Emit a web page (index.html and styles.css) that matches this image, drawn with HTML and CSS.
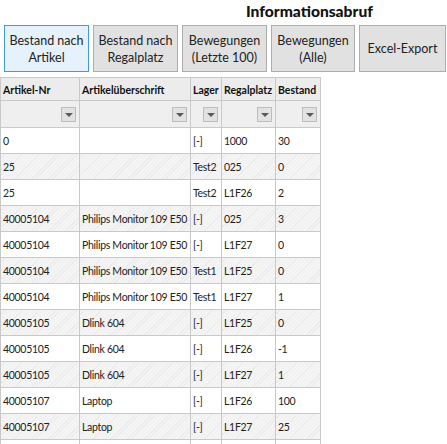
FILE: index.html
```html
<!DOCTYPE html>
<html>
<head>
<meta charset="utf-8">
<link rel="stylesheet" href="styles.css">
</head>
<body>
<div class="title">Informationsabruf</div>
<div class="buttons">
  <button class="btn btn-active">Bestand nach<br>Artikel</button>
  <button class="btn">Bestand nach<br>Regalplatz</button>
  <button class="btn">Bewegungen<br>(Letzte 100)</button>
  <button class="btn btn-4">Bewegungen<br>(Alle)</button>
  <button class="btn btn-5">Excel-Export</button>
</div>
<table class="grid">
  <colgroup>
    <col class="c1"><col class="c2"><col class="c3"><col class="c4"><col class="c5">
  </colgroup>
  <thead>
    <tr class="head">
      <th>Artikel-Nr</th><th>Artikelüberschrift</th><th>Lager</th><th>Regalplatz</th><th>Bestand</th>
    </tr>
    <tr class="filter">
      <td><span class="dd"></span></td><td><span class="dd"></span></td><td><span class="dd"></span></td><td><span class="dd"></span></td><td><span class="dd"></span></td>
    </tr>
  </thead>
  <tbody>
    <tr><td>0</td><td></td><td>[-]</td><td>1000</td><td>30</td></tr>
    <tr class="alt"><td>25</td><td></td><td>Test2</td><td>025</td><td>0</td></tr>
    <tr><td>25</td><td></td><td>Test2</td><td>L1F26</td><td>2</td></tr>
    <tr class="alt"><td>40005104</td><td>Philips Monitor 109 E50</td><td>[-]</td><td>025</td><td>3</td></tr>
    <tr><td>40005104</td><td>Philips Monitor 109 E50</td><td>[-]</td><td>L1F27</td><td>0</td></tr>
    <tr class="alt"><td>40005104</td><td>Philips Monitor 109 E50</td><td>Test1</td><td>L1F25</td><td>0</td></tr>
    <tr><td>40005104</td><td>Philips Monitor 109 E50</td><td>Test1</td><td>L1F27</td><td>1</td></tr>
    <tr class="alt"><td>40005105</td><td>Dlink 604</td><td>[-]</td><td>L1F25</td><td>0</td></tr>
    <tr><td>40005105</td><td>Dlink 604</td><td>[-]</td><td>L1F26</td><td>-1</td></tr>
    <tr class="alt"><td>40005105</td><td>Dlink 604</td><td>[-]</td><td>L1F27</td><td>1</td></tr>
    <tr><td>40005107</td><td>Laptop</td><td>[-]</td><td>L1F26</td><td>100</td></tr>
    <tr class="alt"><td>40005107</td><td>Laptop</td><td>[-]</td><td>L1F27</td><td>25</td></tr>
    <tr><td></td><td></td><td></td><td></td><td></td></tr>
  </tbody>
</table>
</body>
</html>
```
FILE: styles.css
```css
html, body {
  margin: 0;
  padding: 0;
  background: #ffffff;
  overflow: hidden;
  font-family: "Lato", "Open Sans", sans-serif;
  color: #1a1a1a;
}
.title {
  height: 25px;
  line-height: 22px;
  padding-left: 246px;
  font-size: 15.6px;
  font-weight: 900;
  color: #111;
  white-space: nowrap;
}
.buttons {
  display: flex;
  gap: 4px;
  padding-left: 4px;
  height: 47px;
}
.btn {
  width: 85px;
  height: 47px;
  margin: 0;
  padding: 0;
  border: 1px solid #adadad;
  background: #e1e1e1;
  font-family: "Lato", "Open Sans", sans-serif;
  font-size: 12.5px;
  line-height: 17px;
  color: #222;
  text-align: center;
}
.btn-active {
  background: #e5f1fb;
  border-color: #3d9be3;
}
.btn-4 { width: 84px; }
.btn-5 { width: 87px; }
.grid {
  margin-top: 5px;
  border-collapse: collapse;
  table-layout: fixed;
  width: 320px;
  font-size: 10.5px;
}
.c1 { width: 79px; }
.c2 { width: 111px; }
.c3 { width: 31px; }
.c4 { width: 54px; }
.c5 { width: 45px; }
.grid th, .grid td {
  border: 1px solid #c9c9c9;
  padding: 1px 0 0 2px;
  text-align: left;
  white-space: nowrap;
  overflow: hidden;
}
.head th {
  height: 21px;
  background: #ececec;
  font-weight: 700;
  font-size: 10.5px;
  color: #111;
}
.filter td {
  height: 26px;
  background: #efefef;
  text-align: right;
  padding: 0 3px 0 0;
}
.dd {
  display: inline-block;
  width: 13px;
  height: 13px;
  border: 1px solid #bdbdbd;
  background: #e2e2e2;
  position: relative;
  vertical-align: middle;
}
.dd::after {
  content: "";
  position: absolute;
  left: 3px;
  top: 5px;
  border-left: 4px solid transparent;
  border-right: 4px solid transparent;
  border-top: 4px solid #5a5a5a;
}
tbody td {
  height: 24px;
  color: #222;
  letter-spacing: -0.3px;
}
tbody tr.alt td {
  background: repeating-linear-gradient(135deg, #f6f6f6 0 2px, #e9e9e9 2px 3px);
}
```
